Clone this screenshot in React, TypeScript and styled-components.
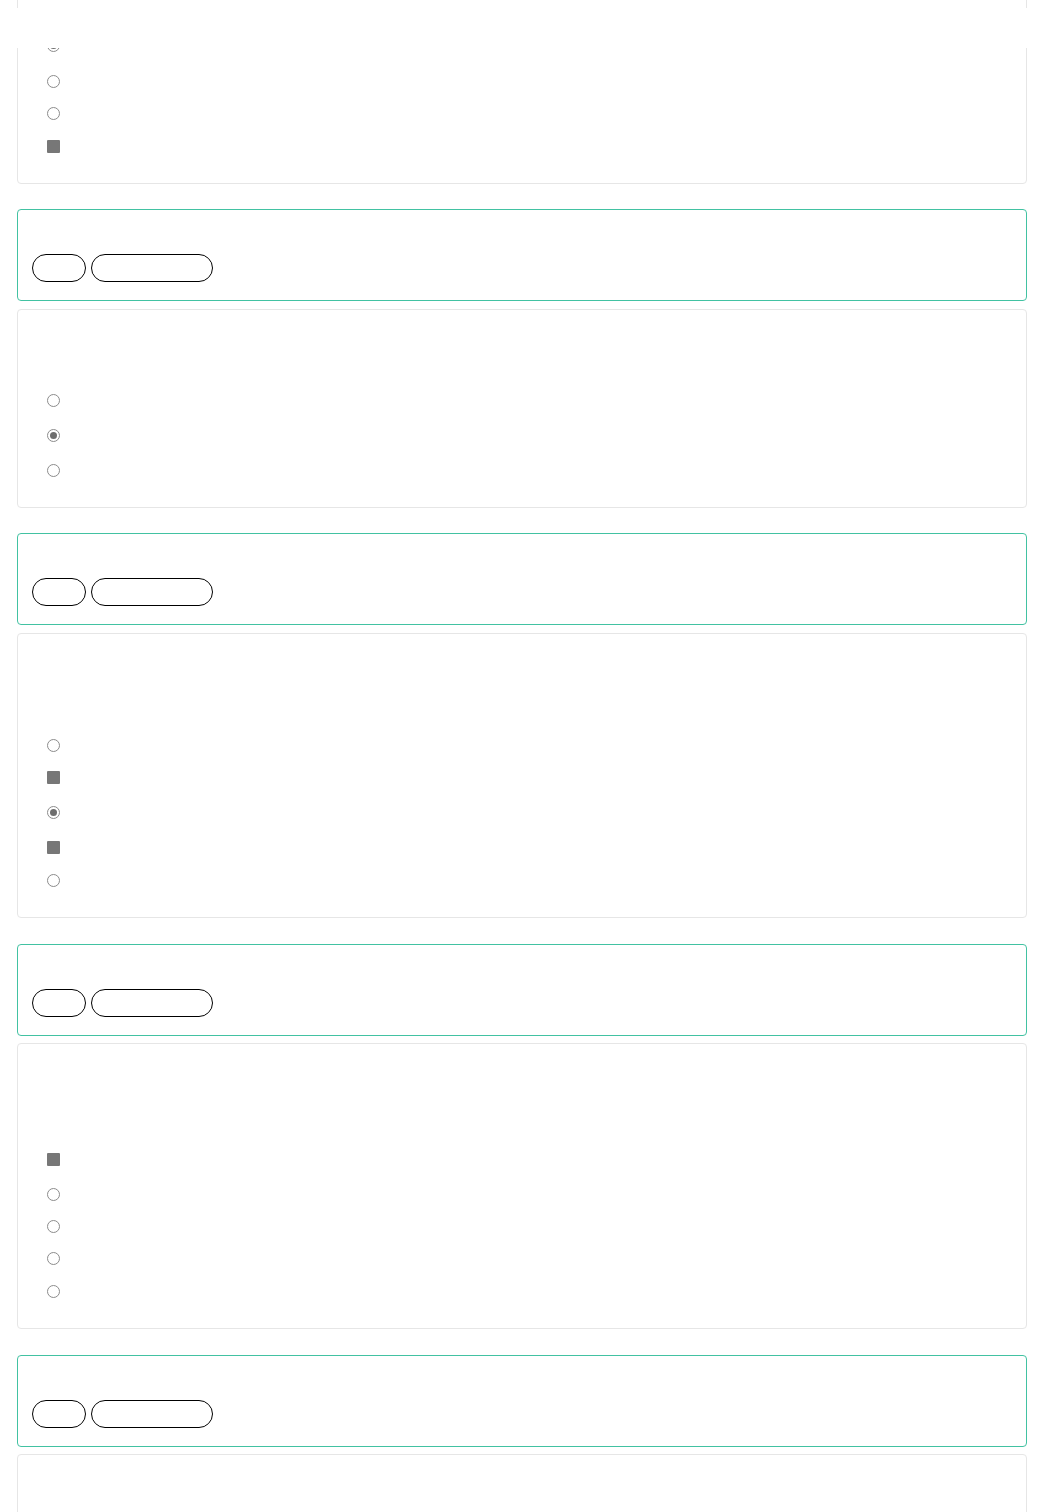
import React from "react";
import styled, { createGlobalStyle } from "styled-components";

const GlobalStyle = createGlobalStyle`
  html { overflow: hidden; }
  body {
    margin: 0;
    background: #ffffff;
    font-family: "Open Sans", "Liberation Sans", Arial, sans-serif;
  }
`;

const Page = styled.div`
  padding: 0 17px;
  display: flex;
  flex-direction: column;
`;

const TopBar = styled.header`
  position: fixed;
  top: 8px;
  left: 0;
  right: 0;
  height: 40px;
  background: #ffffff;
  z-index: 10;
`;

const List = styled.div`
  display: flex;
  flex-direction: column;
  margin-top: -11px;
`;

const Group = styled.section<{ $gap: number; $after: number }>`
  display: flex;
  flex-direction: column;
  gap: ${(p) => p.$gap}px;
  margin-bottom: ${(p) => p.$after}px;
`;

const ActionCard = styled.div`
  border: 1px solid #42c2a2;
  border-radius: 4px;
  padding: 14px 14px 18px;
  background: #ffffff;
  display: flex;
  flex-direction: column;
`;

const ActionTitle = styled.div`
  height: 30px;
  color: #ffffff;
`;

const PillRow = styled.div`
  display: flex;
  gap: 5px;
`;

const Pill = styled.button<{ $w: number }>`
  width: ${(p) => p.$w}px;
  height: 28px;
  box-sizing: border-box;
  border: 1px solid #000000;
  border-radius: 14px;
  background: #ffffff;
  padding: 0;
  font: inherit;
  color: #ffffff;
`;

const QuestionCard = styled.div`
  border: 1px solid #e6e6e6;
  border-radius: 4px;
  padding: 0 14px 21px;
  background: #ffffff;
  display: flex;
  flex-direction: column;
`;

const QuestionText = styled.div<{ $h: number }>`
  height: ${(p) => p.$h}px;
`;

const OptionRow = styled.label<{ $mt: number }>`
  display: flex;
  align-items: center;
  height: 32px;
  margin-top: ${(p) => p.$mt}px;
  padding-left: 15px;
`;

const Radio = styled.span<{ $checked?: boolean }>`
  width: 13px;
  height: 13px;
  box-sizing: border-box;
  border-radius: 50%;
  border: 1px solid #8c8c8c;
  background: #ffffff;
  display: flex;
  align-items: center;
  justify-content: center;
  &::after {
    content: "";
    display: ${(p) => (p.$checked ? "block" : "none")};
    width: 7px;
    height: 7px;
    border-radius: 50%;
    background: #6e6e6e;
  }
`;

const Checkbox = styled.span`
  width: 13px;
  height: 13px;
  box-sizing: border-box;
  background: #777777;
  border-radius: 1px;
`;

type Opt = { kind: "r" | "cr" | "cb"; mt: number };

const Control = ({ kind }: { kind: Opt["kind"] }) =>
  kind === "cb" ? <Checkbox /> : <Radio $checked={kind === "cr"} />;

const Question = ({ top, opts }: { top: number; opts: Opt[] }) => (
  <QuestionCard>
    <QuestionText $h={top} />
    {opts.map((o, i) => (
      <OptionRow key={i} $mt={o.mt}>
        <Control kind={o.kind} />
      </OptionRow>
    ))}
  </QuestionCard>
);

const Actions = () => (
  <ActionCard>
    <ActionTitle />
    <PillRow>
      <Pill $w={54} />
      <Pill $w={122} />
    </PillRow>
  </ActionCard>
);

const questions: { top: number; gap: number; after: number; opts: Opt[] }[] = [
  {
    top: 74,
    gap: 8,
    after: 25,
    opts: [
      { kind: "r", mt: 0 },
      { kind: "cr", mt: 3 },
      { kind: "r", mt: 3 },
    ],
  },
  {
    top: 95,
    gap: 8,
    after: 26,
    opts: [
      { kind: "r", mt: 0 },
      { kind: "cb", mt: 0 },
      { kind: "cr", mt: 3 },
      { kind: "cb", mt: 3 },
      { kind: "r", mt: 1 },
    ],
  },
  {
    top: 99,
    gap: 7,
    after: 26,
    opts: [
      { kind: "cb", mt: 0 },
      { kind: "r", mt: 3 },
      { kind: "r", mt: 0 },
      { kind: "r", mt: 0 },
      { kind: "r", mt: 1 },
    ],
  },
  {
    top: 99,
    gap: 7,
    after: 26,
    opts: [
      { kind: "r", mt: 0 },
      { kind: "r", mt: 0 },
      { kind: "r", mt: 0 },
    ],
  },
];

export default function App() {
  return (
    <>
      <GlobalStyle />
      <TopBar />
      <Page>
        <List>
          <Group $gap={0} $after={25}>
            <Question
              top={39}
              opts={[
                { kind: "cr", mt: 0 },
                { kind: "r", mt: 4 },
                { kind: "r", mt: 0 },
                { kind: "cb", mt: 1 },
              ]}
            />
          </Group>
          {questions.map((q, i) => (
            <Group key={i} $gap={q.gap} $after={q.after}>
              <Actions />
              <Question top={q.top} opts={q.opts} />
            </Group>
          ))}
        </List>
      </Page>
    </>
  );
}
